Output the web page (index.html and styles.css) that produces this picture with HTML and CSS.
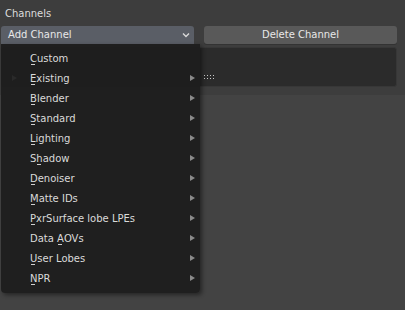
FILE: index.html
```html
<!DOCTYPE html>
<html>
<head>
<meta charset="utf-8">
<link rel="stylesheet" href="styles.css">
</head>
<body>
<div class="panel">
  <div class="title">Channels</div>
  <div class="buttons">
    <div class="btn add">
      <span>Add Channel</span>
      <svg class="chev" width="8" height="6" viewBox="0 0 8 6"><path d="M1 1.5 L4 4.5 L7 1.5" fill="none" stroke="#d8d8d8" stroke-width="1.4"/></svg>
    </div>
    <div class="btn del">Delete Channel</div>
  </div>
  <div class="listbox">
    <div class="grip">
      <i></i><i></i><i></i><i></i><i></i><i></i><i></i><i></i>
    </div>
  </div>
  <div class="menu">
    <div class="ghost"></div>
    <div class="item"><span class="lbl"><u>C</u>ustom</span></div>
    <div class="item sub"><span class="lbl"><u>E</u>xisting</span></div>
    <div class="item sub"><span class="lbl"><u>B</u>lender</span></div>
    <div class="item sub"><span class="lbl"><u>S</u>tandard</span></div>
    <div class="item sub"><span class="lbl"><u>L</u>ighting</span></div>
    <div class="item sub"><span class="lbl">S<u>h</u>adow</span></div>
    <div class="item sub"><span class="lbl"><u>D</u>enoiser</span></div>
    <div class="item sub"><span class="lbl"><u>M</u>atte IDs</span></div>
    <div class="item sub"><span class="lbl"><u>P</u>xrSurface lobe LPEs</span></div>
    <div class="item sub"><span class="lbl">Data <u>A</u>OVs</span></div>
    <div class="item sub"><span class="lbl"><u>U</u>ser Lobes</span></div>
    <div class="item sub"><span class="lbl"><u>N</u>PR</span></div>
  </div>
</div>
</body>
</html>
```

FILE: styles.css
```css
html, body {
  margin: 0;
  padding: 0;
}
body {
  width: 405px;
  height: 310px;
  background: #434343;
  font-family: "DejaVu Sans", sans-serif;
  font-size: 10px;
  color: #e0e0e0;
  overflow: hidden;
}
.panel {
  position: relative;
  height: 95px;
  background: #3d3d3d;
  padding: 0 8px 0 1px;
  box-sizing: border-box;
}
.title {
  height: 26px;
  line-height: 27px;
  padding-left: 4px;
  color: #dcdcdc;
}
.buttons {
  display: grid;
  grid-template-columns: 1fr 1fr;
  gap: 10px;
  height: 18px;
}
.btn {
  min-width: 0;
  height: 18px;
  border-radius: 3px;
  line-height: 18px;
  box-sizing: border-box;
  color: #e8e8e8;
}
.add {
  background: #5a5e66;
  border-radius: 3px 3px 0 0;
  display: flex;
  align-items: center;
  justify-content: space-between;
  padding: 0 4px 0 7px;
}
.chev {
  display: block;
}
.del {
  background: #595959;
  text-align: center;
  box-shadow: 0 1px 0 #333;
}
.listbox {
  margin-top: 3px;
  height: 40px;
  background: #2b2b2b;
  border: 1px solid #373737;
  border-radius: 3px;
  box-sizing: border-box;
  position: relative;
}
.grip {
  position: absolute;
  left: 202px;
  top: 27px;
  display: grid;
  grid-template-columns: repeat(4, 1px);
  column-gap: 2px;
  row-gap: 2px;
}
.grip i {
  width: 1px;
  height: 1px;
  background: #c8c8c8;
}
.menu {
  position: absolute;
  left: 1px;
  top: 44px;
  width: 199px;
  padding: 4px 0 5px;
  background: rgba(30, 30, 30, 0.97);
  border-radius: 0 0 4px 4px;
  box-shadow: 2px 2px 4px rgba(0, 0, 0, 0.45);
}
.ghost {
  position: absolute;
  left: 11px;
  top: 31px;
  width: 0;
  height: 0;
  border-top: 3px solid transparent;
  border-bottom: 3px solid transparent;
  border-left: 5px solid #2a2a2a;
}
.item {
  position: relative;
  height: 20px;
  line-height: 21px;
  padding-left: 29px;
  color: #dadada;
}
.lbl u {
  text-decoration: none;
  position: relative;
}
.lbl u::after {
  content: "";
  position: absolute;
  left: 1px;
  width: 4px;
  top: 11px;
  height: 1px;
  background: #cfcfcf;
}
.sub::after {
  content: "";
  position: absolute;
  right: 5px;
  top: 7px;
  width: 0;
  height: 0;
  border-top: 3px solid transparent;
  border-bottom: 3px solid transparent;
  border-left: 5px solid #8a8a8a;
}
```
